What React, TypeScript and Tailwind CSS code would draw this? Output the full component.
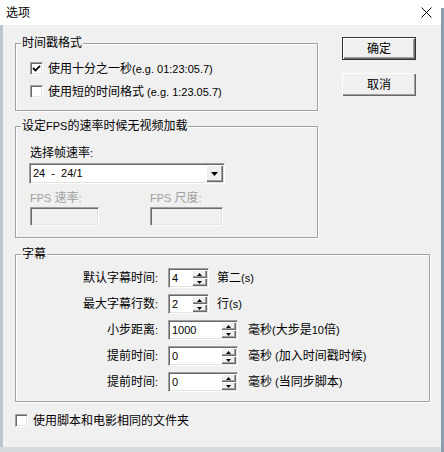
import React from "react";

const sunken =
  "border border-t-[#a0a0a0] border-l-[#a0a0a0] border-b-white border-r-white shadow-[inset_1px_1px_0_#696969,inset_-1px_-1px_0_#e3e3e3]";
const raised =
  "shadow-[inset_1px_1px_0_#ffffff,inset_-1px_-1px_0_#696969,inset_-2px_-2px_0_#a0a0a0] bg-[#f0f0f0]";

function T({ s }: { s: string }) {
  const parts = s.split(/([\u3000-\u9fff\uff00-\uffef]+)/).filter((p) => p.length > 0);
  return (
    <>
      {parts.map((p, i) =>
        /[\u3000-\u9fff\uff00-\uffef]/.test(p) ? (
          <span key={i}>{p}</span>
        ) : (
          <span key={i} className="text-[11px]">
            {p}
          </span>
        )
      )}
    </>
  );
}

function Checkbox({ checked }: { checked?: boolean }) {
  return (
    <div className={`w-[13px] h-[13px] shrink-0 bg-white flex items-center justify-center ${sunken}`}>
      {checked && (
        <svg width="9" height="9" viewBox="0 0 9 9">
          <polyline points="1,4 3.5,6.5 8,1.8" fill="none" stroke="#000" strokeWidth="1.8" />
        </svg>
      )}
    </div>
  );
}

function GroupBox({
  label,
  className,
  children,
}: {
  label: string;
  className: string;
  children?: React.ReactNode;
}) {
  return (
    <div
      className={`relative border border-[#a0a0a0] shadow-[inset_1px_1px_0_#ffffff,1px_1px_0_#ffffff] ${className}`}
    >
      <div className="absolute left-[5px] top-[-9px] px-[1px] bg-[#f0f0f0] leading-[16px]">
        <T s={label} />
      </div>
      {children}
    </div>
  );
}

function SpinHalf({ up }: { up?: boolean }) {
  return (
    <div className={`flex-1 flex items-center justify-center ${raised}`}>
      <svg width="5" height="3" viewBox="0 0 5 3">
        {up ? <polygon points="2.5,0 5,3 0,3" fill="#000" /> : <polygon points="0,0 5,0 2.5,3" fill="#000" />}
      </svg>
    </div>
  );
}

function Spin({ value, w }: { value: string; w: string }) {
  return (
    <div className={`h-[20px] ${w} bg-white flex items-stretch p-[1px] ${sunken}`}>
      <div className="flex-1 pl-[2px] leading-[16px]">
        <T s={value} />
      </div>
      <div className="w-[15px] flex flex-col">
        <SpinHalf up />
        <SpinHalf />
      </div>
    </div>
  );
}

function SubRow({ label, value, w, unit, ml }: { label: string; value: string; w: string; unit: string; ml: string }) {
  return (
    <div className="flex items-center h-[20px]">
      <div className="w-[142px] text-right leading-[16px]">
        <T s={label} />
      </div>
      <div className="ml-[10px]">
        <Spin value={value} w={w} />
      </div>
      <div className={`${ml} leading-[16px]`}>
        <T s={unit} />
      </div>
    </div>
  );
}

function Button({ label, isDefault }: { label: string; isDefault?: boolean }) {
  return (
    <div
      className={`w-[74px] h-[23px] ${isDefault ? "border border-[#333333]" : ""} ${raised} flex items-center justify-center leading-[16px]`}
    >
      {label}
    </div>
  );
}

export default function App() {
  return (
    <div
      className="w-[444px] h-[452px] flex bg-[#f0f0f0] overflow-hidden text-[12px] text-black"
      style={{ fontFamily: '"Liberation Sans", "Noto Sans CJK SC", sans-serif' }}
    >
      <div className="w-[441px] flex flex-col">
        {/* Title bar */}
        <div className="h-[25px] bg-white flex items-center pl-[6px] pr-[9px]">
          <div className="flex-1 leading-[16px]">选项</div>
          <svg width="11" height="11" viewBox="0 0 11 11">
            <path d="M0.5 0.5 L10.5 10.5 M10.5 0.5 L0.5 10.5" stroke="#000" strokeWidth="1" fill="none" />
          </svg>
        </div>
        <div className="flex flex-1">
          <div className="w-[3px] bg-[#bcc6d1]" />
          <div className="flex-1 flex flex-col pl-[12px] pt-[12px]">
            <div className="flex">
              <div className="w-[303px] pt-[6px] flex flex-col">
                <GroupBox label="时间戳格式" className="h-[68px] pt-[18px] pl-[14px]">
                  <div className="flex flex-col gap-[10px]">
                    <div className="flex items-center h-[13px] gap-[5px]">
                      <Checkbox checked />
                      <span className="leading-[16px]">
                        <T s="使用十分之一秒(e.g. 01:23:05.7)" />
                      </span>
                    </div>
                    <div className="flex items-center h-[13px] gap-[5px]">
                      <Checkbox />
                      <span className="leading-[16px]">
                        <T s="使用短的时间格式 (e.g. 1:23.05.7)" />
                      </span>
                    </div>
                  </div>
                </GroupBox>
                <GroupBox label="设定FPS的速率时候无视频加载" className="mt-[15px] h-[112px] pt-[18px] pl-[14px]">
                  <div className="leading-[16px]">
                    <T s="选择帧速率:" />
                  </div>
                  <div className={`mt-[2px] ml-[-1px] w-[196px] h-[21px] bg-white flex p-[1px] ${sunken}`}>
                    <div className="flex-1 pl-[2px] leading-[17px] text-[11px]">24&nbsp; -&nbsp; 24/1</div>
                    <div className={`w-[17px] flex items-center justify-center ${raised}`}>
                      <svg width="7" height="4" viewBox="0 0 7 4">
                        <polygon points="0,0 7,0 3.5,4" fill="#000" />
                      </svg>
                    </div>
                  </div>
                  <div className="flex mt-[6px]">
                    <div className="w-[120px] flex flex-col">
                      <div className="leading-[16px] text-[#a0a0a0]">
                        <T s="FPS 速率:" />
                      </div>
                      <div className={`mt-[1px] w-[69px] h-[19px] ${sunken}`} />
                    </div>
                    <div className="flex flex-col">
                      <div className="leading-[16px] text-[#a0a0a0]">
                        <T s="FPS 尺度:" />
                      </div>
                      <div className={`mt-[1px] w-[73px] h-[19px] ${sunken}`} />
                    </div>
                  </div>
                </GroupBox>
              </div>
              <div className="ml-[24px] flex flex-col gap-[13px]">
                <Button label="确定" isDefault />
                <Button label="取消" />
              </div>
            </div>
            <GroupBox label="字幕" className="mt-[16px] w-[415px] h-[148px] pt-[13px]">
              <div className="flex flex-col gap-[6px]">
                <SubRow label="默认字幕时间:" value="4" w="w-[41px]" unit="第二(s)" ml="ml-[8px]" />
                <SubRow label="最大字幕行数:" value="2" w="w-[41px]" unit="行(s)" ml="ml-[8px]" />
                <SubRow label="小步距离:" value="1000" w="w-[70px]" unit="毫秒(大步是10倍)" ml="ml-[10px]" />
                <SubRow label="提前时间:" value="0" w="w-[70px]" unit="毫秒 (加入时间戳时候)" ml="ml-[10px]" />
                <SubRow label="提前时间:" value="0" w="w-[70px]" unit="毫秒 (当同步脚本)" ml="ml-[10px]" />
              </div>
            </GroupBox>
            <div className="mt-[12px] flex items-center h-[13px] gap-[5px]">
              <Checkbox />
              <span className="leading-[16px]">使用脚本和电影相同的文件夹</span>
            </div>
          </div>
        </div>
        <div className="h-[5px] bg-[#d6dbe0]" />
      </div>
      <div className="w-[3px] flex flex-col">
        <div className="h-[8px] bg-white" />
        <div className="flex-1 bg-[#8a9cb0]" />
      </div>
    </div>
  );
}
